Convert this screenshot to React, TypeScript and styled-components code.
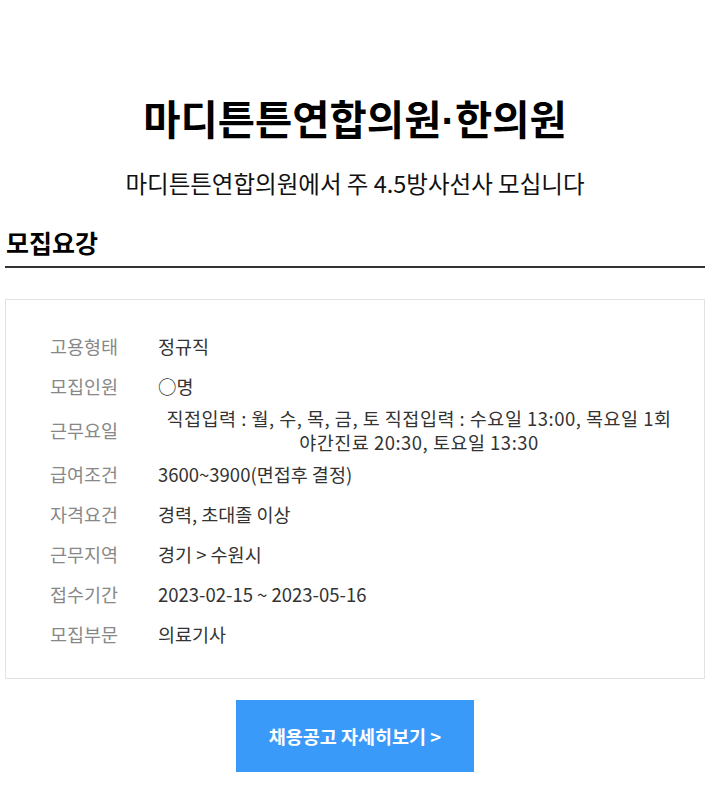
import React from "react";
import styled, { createGlobalStyle } from "styled-components";

const Global = createGlobalStyle`
  html, body { margin: 0; padding: 0; background: #fff; }
  body { font-family: "Noto Sans CJK KR", "Noto Sans", sans-serif; color: #111; }
`;

const Page = styled.div`
  padding: 95px 5px 16px;
  display: flex;
  flex-direction: column;
`;

const Title = styled.h1`
  margin: 0;
  height: 46px;
  text-align: center;
  font-size: 40.5px;
  line-height: 46px;
  font-weight: 700;
  color: #000;
`;

const Dot = styled.span`
  font-family: "Liberation Sans", Arial, sans-serif;
  font-weight: 700;
  line-height: 0;
`;

const Subtitle = styled.p`
  margin: 27px 0 0;
  text-align: center;
  font-size: 23.5px;
  line-height: 30px;
  font-weight: 400;
  color: #111;
`;

const SectionHead = styled.h2`
  margin: 29px 0 0;
  padding: 0 0 9px 1px;
  font-size: 25px;
  line-height: 30px;
  font-weight: 700;
  color: #000;
  border-bottom: 2px solid #333;
`;

const Box = styled.div`
  margin-top: 31px;
  border: 1px solid #e3e3e3;
  padding: 26px 24px 24px 44px;
  display: flex;
  flex-direction: column;
`;

const Row = styled.div`
  display: grid;
  grid-template-columns: 108px 1fr;
  align-items: center;
  min-height: 40px;
`;

const Label = styled.span`
  font-size: 18.5px;
  color: #888;
`;

const Value = styled.span<{ $center?: boolean }>`
  font-size: 18.5px;
  line-height: 24px;
  color: #333;
  text-align: ${(p) => (p.$center ? "center" : "left")};
  letter-spacing: ${(p) => (p.$center ? "0.5px" : "0")};
`;

const ButtonWrap = styled.div`
  display: flex;
  justify-content: center;
  margin-top: 21px;
`;

const DetailButton = styled.a`
  display: flex;
  align-items: center;
  justify-content: center;
  width: 238px;
  height: 72px;
  background: #3a9afa;
  color: #fff;
  font-size: 18.5px;
  font-weight: 700;
  text-decoration: none;
`;

const rows: { label: string; value: React.ReactNode; center?: boolean }[] = [
  { label: "고용형태", value: "정규직" },
  { label: "모집인원", value: "○명" },
  {
    label: "근무요일",
    value: (
      <>
        직접입력 : 월, 수, 목, 금, 토 직접입력 : 수요일 13:00, 목요일 1회
        <br />
        야간진료 20:30, 토요일 13:30
      </>
    ),
    center: true,
  },
  { label: "급여조건", value: "3600~3900(면접후 결정)" },
  { label: "자격요건", value: "경력, 초대졸 이상" },
  { label: "근무지역", value: "경기 > 수원시" },
  { label: "접수기간", value: "2023-02-15 ~ 2023-05-16" },
  { label: "모집부문", value: "의료기사" },
];

export default function App() {
  return (
    <>
      <Global />
      <Page>
        <Title>
          마디튼튼연합의원<Dot>·</Dot>한의원
        </Title>
        <Subtitle>마디튼튼연합의원에서 주 4.5방사선사 모십니다</Subtitle>
        <SectionHead>모집요강</SectionHead>
        <Box>
          {rows.map((r) => (
            <Row key={r.label}>
              <Label>{r.label}</Label>
              <Value $center={r.center}>{r.value}</Value>
            </Row>
          ))}
        </Box>
        <ButtonWrap>
          <DetailButton href="#">채용공고 자세히보기 &gt;</DetailButton>
        </ButtonWrap>
      </Page>
    </>
  );
}
